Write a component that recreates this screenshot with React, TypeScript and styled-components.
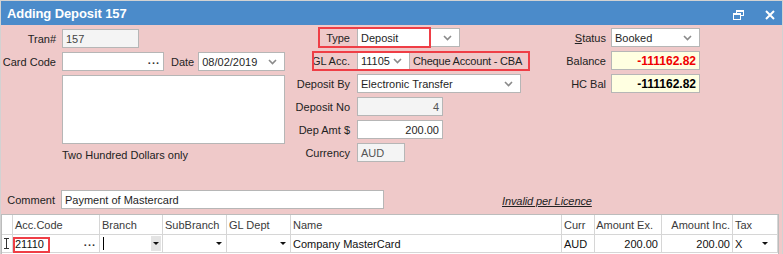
import React from "react";
import styled, { createGlobalStyle } from "styled-components";

const GlobalStyle = createGlobalStyle`
  html, body { margin: 0; padding: 0; background: #ffffff; }
  body {
    font-family: "Liberation Sans", Arial, sans-serif;
    font-size: 11px;
    color: #1f1f1f;
    overflow: hidden;
  }
`;

const Window = styled.div`
  width: 783px;
  height: 254px;
  box-sizing: border-box;
  border: 1px solid #d2d2d2;
  border-bottom: 0;
  background: #efc9c9;
  display: flex;
  flex-direction: column;
  overflow: hidden;
`;

const TitleBar = styled.div`
  height: 24px;
  flex: none;
  background: #4b8bca;
  display: flex;
  align-items: center;
  padding: 0 7px 0 6px;
  color: #fff;
`;

const Title = styled.div`
  flex: 1;
  font-weight: bold;
  font-size: 13px;
  letter-spacing: -0.1px;
  padding-top: 1px;
`;

const TitleButtons = styled.div`
  display: flex;
  align-items: center;
  gap: 21px;
  padding-top: 4px;
`;

const Body = styled.div`
  flex: 1;
  display: flex;
  flex-direction: column;
  padding-top: 3px;
  min-height: 0;
`;

const FormArea = styled.div`
  display: grid;
  grid-template-columns: 289px 255px 1fr;
  align-items: start;
`;

const FieldGrid = styled.div<{ $cols: string; $gap: number }>`
  position: relative;
  display: grid;
  grid-template-columns: ${(p) => p.$cols};
  column-gap: ${(p) => p.$gap}px;
  row-gap: 4px;
  grid-auto-rows: 19px;
  align-content: start;
`;

const LeftGrid = styled(FieldGrid)`
  grid-auto-rows: auto;
  padding-top: 1px;
`;

const Label = styled.div`
  align-self: center;
  text-align: right;
  white-space: nowrap;
  color: #222;
`;

const Box = styled.div<{
  $w: number;
  $h?: number;
  $bg?: string;
  $right?: boolean;
  $color?: string;
  $bold?: boolean;
}>`
  width: ${(p) => p.$w}px;
  height: ${(p) => p.$h ?? 19}px;
  box-sizing: border-box;
  border: 1px solid #b6b6b6;
  background: ${(p) => p.$bg ?? "#ffffff"};
  color: ${(p) => p.$color ?? "#1f1f1f"};
  font-weight: ${(p) => (p.$bold ? "bold" : "normal")};
  font-size: ${(p) => (p.$bold ? "12px" : "11px")};
  display: flex;
  align-items: center;
  justify-content: ${(p) => (p.$right ? "flex-end" : "space-between")};
  padding: 0 3px;
  white-space: nowrap;
  flex: none;
`;

const SelectBox = styled(Box)`
  padding-right: 7px;
`;

const Inline = styled.div`
  display: flex;
  align-items: center;
`;

const DateLabel = styled.span`
  margin: 0 4px 0 7px;
`;

const Dots = styled.span`
  letter-spacing: 1px;
  color: #333;
  font-weight: bold;
  margin-top: -3px;
`;

const Note = styled.div`
  margin-top: 1px;
  color: #222;
`;

const Plain = styled.span`
  margin-left: 3px;
  letter-spacing: -0.2px;
  color: #222;
  white-space: nowrap;
`;

const RedBox = styled.div<{ $l: number; $t: number; $w: number; $h: number }>`
  position: absolute;
  left: ${(p) => p.$l}px;
  top: ${(p) => p.$t}px;
  width: ${(p) => p.$w}px;
  height: ${(p) => p.$h}px;
  box-sizing: border-box;
  border: 2px solid #ef3e46;
  pointer-events: none;
`;

const CommentRow = styled.div`
  display: flex;
  align-items: center;
  margin-top: 28px;
`;

const CommentLabel = styled.div`
  width: 54px;
  margin-right: 6px;
  text-align: right;
  color: #222;
`;

const Licence = styled.span`
  margin-left: 118px;
  margin-top: 3px;
  font-style: italic;
  text-decoration: underline;
  font-size: 11px;
  letter-spacing: -0.1px;
  color: #222;
`;

const Table = styled.div`
  flex: 1;
  margin: 5px 3px 0 0;
  background: #ffffff;
  border: 1px solid #bcbcbc;
  border-bottom: 0;
  display: grid;
  grid-template-columns: 11px 87px 63px 64px 64px 271px 33px 67px 71px 45px;
  grid-template-rows: 20px 18px 1fr;
`;

const Cell = styled.div<{ $right?: boolean; $pr?: number; $head?: boolean }>`
  position: relative;
  box-sizing: border-box;
  border-right: 1px solid #d6d6d6;
  border-bottom: 1px solid #d6d6d6;
  display: flex;
  align-items: center;
  justify-content: ${(p) => (p.$right ? "flex-end" : "space-between")};
  padding: 0 ${(p) => p.$pr ?? 3}px 0 2px;
  color: ${(p) => (p.$head ? "#3a3a3a" : "#111")};
  white-space: nowrap;
  overflow: visible;
`;

const Filler = styled.div`
  grid-column: 1 / -1;
`;

const Tri = styled.span`
  width: 0;
  height: 0;
  border-left: 3px solid transparent;
  border-right: 3px solid transparent;
  border-top: 3px solid #111;
`;

const DropBtn = styled.span`
  width: 10px;
  height: 15px;
  margin-right: -2px;
  background: #e4e4e4;
  display: flex;
  align-items: center;
  justify-content: center;
`;

const Caret = styled.span`
  width: 1px;
  height: 13px;
  background: #000;
  margin-left: 1px;
`;

const Chevron = () => (
  <svg width="9" height="6" viewBox="0 0 9 6">
    <polyline points="1,1 4.5,4.5 8,1" fill="none" stroke="#8a8a8a" strokeWidth="1.6" />
  </svg>
);

const RestoreIcon = () => (
  <svg width="11" height="10" viewBox="0 0 11 10">
    <rect x="3.5" y="0.5" width="7" height="5" fill="none" stroke="#fff" strokeWidth="1" />
    <rect x="3.5" y="0.5" width="7" height="1.5" fill="#fff" />
    <rect x="0.5" y="3.5" width="7" height="6" fill="#4b8bca" stroke="#fff" strokeWidth="1" />
    <rect x="0.5" y="3.5" width="7" height="1.5" fill="#fff" />
  </svg>
);

const CloseIcon = () => (
  <svg width="10" height="10" viewBox="0 0 10 10">
    <path d="M1 1 L9 9 M9 1 L1 9" stroke="#fff" strokeWidth="2" />
  </svg>
);

const IBeam = () => (
  <svg width="5" height="11" viewBox="0 0 5 11">
    <path d="M0 0.5 H5 M0 10.5 H5 M2.5 0 V11" stroke="#333" strokeWidth="1" />
  </svg>
);

export default function App() {
  return (
    <>
      <GlobalStyle />
      <Window>
        <TitleBar>
          <Title>Adding Deposit 157</Title>
          <TitleButtons>
            <RestoreIcon />
            <CloseIcon />
          </TitleButtons>
        </TitleBar>

        <Body>
          <FormArea>
            <LeftGrid $cols="55px 223px" $gap={6}>
              <Label>Tran#</Label>
              <Box $w={77} $bg="#f4f4f4" $color="#444">157</Box>

              <Label>Card Code</Label>
              <Inline>
                <Box $w={102}>
                  <span />
                  <Dots>...</Dots>
                </Box>
                <DateLabel>Date</DateLabel>
                <SelectBox $w={87}>
                  08/02/2019
                  <Chevron />
                </SelectBox>
              </Inline>

              <span />
              <Box $w={223} $h={69} />

              <span />
              <Note>Two Hundred Dollars only</Note>
            </LeftGrid>

            <FieldGrid $cols="60px auto" $gap={7}>
              <Label>Type</Label>
              <SelectBox $w={103}>
                Deposit
                <Chevron />
              </SelectBox>

              <Label>GL Acc.</Label>
              <Inline>
                <SelectBox $w={53}>
                  11105
                  <Chevron />
                </SelectBox>
                <Plain>Cheque Account - CBA</Plain>
              </Inline>

              <Label>Deposit By</Label>
              <SelectBox $w={164}>
                Electronic Transfer
                <Chevron />
              </SelectBox>

              <Label>Deposit No</Label>
              <Box $w={86} $bg="#f4f4f4" $color="#555" $right>4</Box>

              <Label>Dep Amt $</Label>
              <Box $w={86} $right>200.00</Box>

              <Label>Currency</Label>
              <Box $w={48} $bg="#f4f4f4" $color="#555">AUD</Box>

              <RedBox $l={28} $t={-1} $w={113} $h={21} />
              <RedBox $l={22} $t={23} $w={218} $h={20} />
            </FieldGrid>

            <FieldGrid $cols="61px 89px" $gap={5}>
              <Label>
                <u>S</u>tatus
              </Label>
              <SelectBox $w={89}>
                Booked
                <Chevron />
              </SelectBox>

              <Label>Balance</Label>
              <Box $w={89} $bg="#ffffe1" $color="#f00000" $bold $right>
                -111162.82
              </Box>

              <Label>HC Bal</Label>
              <Box $w={89} $bg="#ffffe1" $color="#000" $bold $right>
                -111162.82
              </Box>
            </FieldGrid>
          </FormArea>

          <CommentRow>
            <CommentLabel>Comment</CommentLabel>
            <Box $w={323}>Payment of Mastercard</Box>
            <Licence>Invalid per Licence</Licence>
          </CommentRow>

          <Table>
            <Cell $head />
            <Cell $head>Acc.Code</Cell>
            <Cell $head>Branch</Cell>
            <Cell $head>SubBranch</Cell>
            <Cell $head>GL Dept</Cell>
            <Cell $head>Name</Cell>
            <Cell $head>Curr</Cell>
            <Cell $head $right $pr={8}>Amount Ex.</Cell>
            <Cell $head $right $pr={2}>Amount Inc.</Cell>
            <Cell $head>Tax</Cell>

            <Cell>
              <IBeam />
            </Cell>
            <Cell>
              21110
              <Dots>...</Dots>
              <RedBox $l={0} $t={2} $w={37} $h={16} />
            </Cell>
            <Cell>
              <Caret />
              <DropBtn>
                <Tri />
              </DropBtn>
            </Cell>
            <Cell $pr={4}>
              <span />
              <Tri />
            </Cell>
            <Cell $pr={4}>
              <span />
              <Tri />
            </Cell>
            <Cell>Company MasterCard</Cell>
            <Cell>AUD</Cell>
            <Cell $right $pr={3}>200.00</Cell>
            <Cell $right $pr={2}>200.00</Cell>
            <Cell $pr={9}>
              X
              <Tri />
            </Cell>

            <Filler />
          </Table>
        </Body>
      </Window>
    </>
  );
}
